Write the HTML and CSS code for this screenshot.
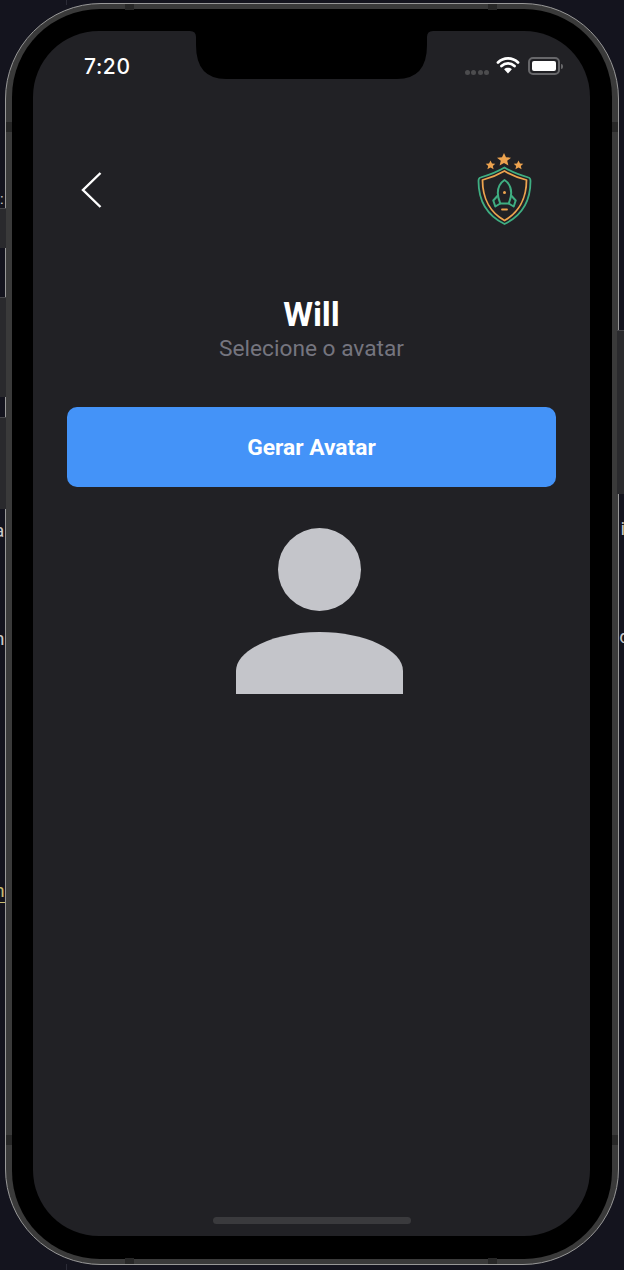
FILE: index.html
```html
<!DOCTYPE html>
<html lang="pt">
<head>
<meta charset="utf-8">
<title>Selecione o avatar</title>
<link rel="stylesheet" href="styles.css">
</head>
<body>
<span class="edge-line edge-top"></span>
<span class="edge-line edge-bottom"></span>
<span class="edge-band band-left-1"></span>
<span class="edge-band band-left-2"></span>
<span class="edge-band band-left-3"></span>
<span class="edge-band band-right"></span>
<span class="edge-text txt-colon">:</span>
<span class="edge-text txt-a">a</span>
<span class="edge-text txt-n">n</span>
<span class="edge-text txt-m">m</span>
<span class="edge-text txt-i">i</span>
<span class="edge-text txt-d">d</span>
<div class="phone">
  <div class="rim">
    <div class="bezel">
      <main class="screen">
        <svg class="notch" width="252" height="48" viewBox="0 0 252 48" aria-hidden="true">
          <path fill="#000" d="M0 0H4Q10 0 10 6V14Q10 48 40 48H211Q241 48 241 14V6Q241 0 247 0H252Z"/>
        </svg>
        <header class="status">
          <span class="clock">7:20</span>
          <span class="status-icons">
            <span class="signal"><i></i><i></i><i></i><i></i></span>
            <svg class="wifi" width="24" height="18" viewBox="0 0 23 18" aria-hidden="true">
              <path fill="none" stroke="#fff" stroke-width="2.800" stroke-linecap="round" d="M1.500 6.500C7 1 16 1 21.500 6.500M5 10C8.800 6.500 14.200 6.500 18 10"/>
              <path fill="#fff" d="M11.500 17.500 7.600 13.200C9.800 11.300 13.200 11.300 15.400 13.200Z"/>
            </svg>
            <span class="battery"><span class="battery-fill"></span></span>
            <span class="battery-cap"></span>
          </span>
        </header>
        <nav class="topbar">
          <svg class="back" width="24" height="38" viewBox="0 0 24 38" aria-hidden="true">
            <path fill="none" stroke="#fff" stroke-width="2.400" d="M20.500 2 3 19 20.500 36"/>
          </svg>
          <svg class="badge" width="56" height="74" viewBox="0 0 56 74" aria-hidden="true">
            <g fill="#eda34f">
              <path d="M28 1 30 5.300 35 5.700 31.200 8.800 32.400 13.500 28 11 23.600 13.500 24.800 8.800 21 5.700 26 5.300Z"/>
              <path d="M14.500 8.500 16 11.500 19.300 11.800 16.800 14 17.600 17.200 14.500 15.500 11.400 17.200 12.200 14 9.700 11.800 13 11.500Z"/>
              <path d="M42.500 8.500 44 11.500 47.300 11.800 44.800 14 45.600 17.200 42.500 15.500 39.400 17.200 40.200 14 37.700 11.800 41 11.500Z"/>
            </g>
            <path fill="none" stroke="#3fae82" stroke-width="1.800" stroke-linejoin="round" d="M28.500 15.500C35 19.500 44 23 52.500 25.500 54.500 26 54.500 28 54.500 29 54.500 50 45 64 28.500 72 12 64 2.500 50 2.500 29 2.500 28 2.500 26 4.500 25.500 13 23 22 19.500 28.500 15.500Z"/>
            <path fill="none" stroke="#eda34f" stroke-width="1.800" stroke-linejoin="round" d="M28.500 19C35 22.800 42 25.800 50.500 28 50.500 47 42 61 28.500 68.500 15 61 6.500 47 6.500 28 15 25.800 22 22.800 28.500 19Z"/>
            <g fill="none" stroke="#3fae82" stroke-width="2" stroke-linejoin="round">
              <path d="M28.500 28C24 31 21.800 36 21.800 41 21.800 46 23.800 50 24.300 51.500H32.700C33.200 50 35.200 46 35.200 41 35.200 36 33 31 28.500 28Z"/>
              <path d="M22.300 43 17.300 48.500 19.300 54.500 24.300 51.500M34.700 43 39.700 48.500 37.700 54.500 32.700 51.500"/>
            </g>
            <circle cx="28.500" cy="40.500" r="1.500" fill="#eda34f"/>
            <path stroke="#eda34f" stroke-width="1.800" stroke-linecap="round" d="M26 57.500H31"/>
          </svg>
        </nav>
        <section class="intro">
          <h1 class="name">Will</h1>
          <p class="hint">Selecione o avatar</p>
        </section>
        <button class="cta" type="button">Gerar Avatar</button>
        <svg class="avatar" width="167" height="166" viewBox="0 0 167 166" aria-hidden="true">
          <circle cx="83.500" cy="41.500" r="41.500" fill="#c4c5ca"/>
          <path fill="#c4c5ca" d="M0 166V143C0 122 38 104 83.500 104S167 122 167 143V166Z"/>
        </svg>
        <span class="home"></span>
      </main>
    </div>
  </div>
</div>
<span class="antenna ant-top-l"></span>
<span class="antenna ant-top-r"></span>
<span class="antenna ant-bot-l"></span>
<span class="antenna ant-bot-r"></span>
<span class="antenna-v ant-left-t"></span>
<span class="antenna-v ant-left-b"></span>
<span class="antenna-v ant-right-t"></span>
<span class="antenna-v ant-right-b"></span>
</body>
</html>
```

FILE: styles.css
```css
* { box-sizing: border-box; }

html, body {
  margin: 0;
  height: 100%;
}

body {
  position: relative;
  overflow: hidden;
  background: #14141e;
  font-family: Roboto, "Liberation Sans", sans-serif;
  padding: 3px 5px 5px;
}

.edge-line {
  position: absolute;
  left: 66px;
  width: 1px;
  background: #2b2b36;
}
.edge-top { top: 0; height: 5px; }
.edge-bottom { bottom: 0; height: 6px; }

.edge-band {
  position: absolute;
  background: #2a2a2d;
  border-top: 1px solid #46464a;
}
.band-left-1 { left: 0; width: 6px; top: 208px; height: 40px; }
.band-left-2 { left: 0; width: 6px; top: 297px; height: 100px; }
.band-left-3 { left: 0; width: 6px; top: 417px; height: 92px; }
.band-right { right: 0; width: 7px; top: 330px; height: 164px; }

.edge-text {
  position: absolute;
  font-size: 19px;
  line-height: 22px;
  color: #c9c9c9;
}
.txt-colon { left: 0; top: 188px; font-size: 15px; }
.txt-a { left: -6px; top: 520px; }
.txt-n { left: -6px; top: 628px; }
.txt-m { left: -12px; top: 880px; color: #c9bb70; border-bottom: 1px solid #c9bb70; }
.txt-i { right: -1px; top: 518px; }
.txt-d { right: -6px; top: 626px; }

.phone {
  height: 100%;
  border-radius: 96px;
  border: 1px solid #989898;
  background: #3a3a3a;
}

.rim {
  height: 100%;
  padding: 5px 6px;
  border-radius: 95px;
}

.bezel {
  height: 100%;
  padding: 22px 22px 23px 21px;
  border-radius: 88px;
  background: #000;
}

.screen {
  position: relative;
  display: flex;
  flex-direction: column;
  align-items: center;
  height: 100%;
  padding: 0 34px;
  border-radius: 66px;
  background: #212125;
  color: #fff;
}

.notch {
  position: absolute;
  top: 0;
  left: 153px;
}

.status {
  align-self: stretch;
  display: flex;
  justify-content: space-between;
  align-items: center;
  height: 24px;
  margin: 23px -7px 0 17px;
}

.clock {
  font-family: Inter, Roboto, sans-serif;
  font-size: 21px;
  font-weight: 500;
  letter-spacing: 0.6px;
}

.status-icons {
  display: flex;
  align-items: center;
}

.signal {
  display: flex;
  gap: 1.500px;
  margin-right: 7px;
  margin-top: 12px;
}

.signal i {
  width: 5px;
  height: 5px;
  border-radius: 50%;
  background: #4c4c4e;
}

.wifi {
  margin-right: 8px;
  margin-top: -2px;
}

.battery {
  width: 32px;
  height: 18px;
  padding: 2px;
  border: 2px solid #67676a;
  border-radius: 5px;
}

.battery-fill {
  display: block;
  height: 100%;
  border-radius: 2px;
  background: #fff;
}

.battery-cap {
  width: 2px;
  height: 5px;
  margin-left: 1px;
  border-radius: 0 2px 2px 0;
  background: #67676a;
}

.topbar {
  align-self: stretch;
  display: flex;
  justify-content: space-between;
  align-items: center;
  height: 74px;
  margin: 74px 24px 0 13px;
}

.back { margin-top: 1px; }

.intro {
  margin-top: 69px;
  text-align: center;
}

.name {
  margin: 0 0 1px;
  font-size: 34px;
  line-height: 39px;
  font-weight: 700;
}

.hint {
  margin: 0;
  font-size: 22.700px;
  line-height: 28px;
  color: #75757f;
}

.cta {
  align-self: stretch;
  height: 80px;
  margin-top: 44px;
  border: 0;
  border-radius: 10px;
  background: #4493f8;
  color: #fff;
  font: 700 22.800px Roboto, sans-serif;
}

.avatar {
  margin: 41px 0 0 15px;
}

.home {
  position: absolute;
  left: 180px;
  bottom: 12px;
  width: 198px;
  height: 7px;
  border-radius: 4px;
  background: #3a3a3d;
}

.antenna, .antenna-v {
  position: absolute;
  background: #272727;
}
.antenna { width: 9px; height: 6px; }
.antenna-v { width: 6px; height: 10px; }
.ant-top-l { left: 125px; top: 4px; }
.ant-top-r { left: 488px; top: 4px; }
.ant-bot-l { left: 125px; top: 1258px; }
.ant-bot-r { left: 488px; top: 1258px; }
.ant-left-t { left: 6px; top: 122px; }
.ant-left-b { left: 6px; top: 1135px; }
.ant-right-t { left: 612px; top: 122px; }
.ant-right-b { left: 612px; top: 1135px; }
```
